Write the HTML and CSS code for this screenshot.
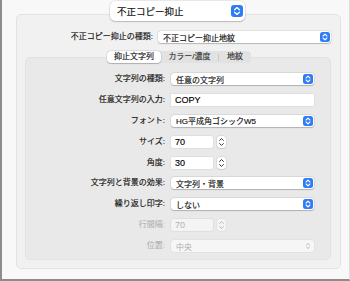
FILE: index.html
```html
<!DOCTYPE html>
<html lang="ja">
<head>
  <meta charset="UTF-8" />
  <title>不正コピー抑止</title>
  <link rel="stylesheet" href="styles.css">
</head>
<body>
  <div class="window">
    <div class="top-row">
      <div class="big-popup">
        <span>不正コピー抑止</span>
        <span class="arrows big">
          <svg viewBox="0 0 12 12" width="12" height="12"><path d="M3.6 4.8 6 2.6 8.4 4.8M3.6 7.2 6 9.4 8.4 7.2" fill="none" stroke="#fff" stroke-width="1.3" stroke-linecap="round" stroke-linejoin="round"/></svg>
        </span>
      </div>
    </div>

    <div class="group">
      <div class="form kind-row">
        <div class="label">不正コピー抑止の種類:</div>
        <div class="popup">
          <span>不正コピー抑止地紋</span>
          <span class="arrows"><svg viewBox="0 0 10 10" width="10" height="10"><path d="M3.1 4 5 2.2 6.9 4M3.1 6 5 7.8 6.9 6" fill="none" stroke="#fff" stroke-width="1.1" stroke-linecap="round" stroke-linejoin="round"/></svg></span>
        </div>
      </div>

      <div class="tabs">
        <div class="tab active">抑止文字列</div>
        <div class="tab">カラー/濃度</div>
        <div class="sep"></div>
        <div class="tab">地紋</div>
      </div>

      <div class="panel">
        <div class="form">
          <div class="label">文字列の種類:</div>
          <div class="popup">
            <span>任意の文字列</span>
            <span class="arrows"><svg viewBox="0 0 10 10" width="10" height="10"><path d="M3.1 4 5 2.2 6.9 4M3.1 6 5 7.8 6.9 6" fill="none" stroke="#fff" stroke-width="1.1" stroke-linecap="round" stroke-linejoin="round"/></svg></span>
          </div>

          <div class="label">任意文字列の入力:</div>
          <div class="field latin">COPY</div>

          <div class="label">フォント:</div>
          <div class="popup">
            <span>HG平成角ゴシックW5</span>
            <span class="arrows"><svg viewBox="0 0 10 10" width="10" height="10"><path d="M3.1 4 5 2.2 6.9 4M3.1 6 5 7.8 6.9 6" fill="none" stroke="#fff" stroke-width="1.1" stroke-linecap="round" stroke-linejoin="round"/></svg></span>
          </div>

          <div class="label">サイズ:</div>
          <div class="num-row">
            <div class="field num latin">70</div>
            <div class="stepper"><svg viewBox="0 0 9 12" width="9" height="12"><path d="M2.6 4.4 4.5 2.6 6.4 4.4M2.6 7.6 4.5 9.4 6.4 7.6" fill="none" stroke="#333" stroke-width="1" stroke-linecap="round" stroke-linejoin="round"/></svg></div>
          </div>

          <div class="label">角度:</div>
          <div class="num-row">
            <div class="field num latin">30</div>
            <div class="stepper"><svg viewBox="0 0 9 12" width="9" height="12"><path d="M2.6 4.4 4.5 2.6 6.4 4.4M2.6 7.6 4.5 9.4 6.4 7.6" fill="none" stroke="#333" stroke-width="1" stroke-linecap="round" stroke-linejoin="round"/></svg></div>
          </div>

          <div class="label">文字列と背景の効果:</div>
          <div class="popup">
            <span>文字列・背景</span>
            <span class="arrows"><svg viewBox="0 0 10 10" width="10" height="10"><path d="M3.1 4 5 2.2 6.9 4M3.1 6 5 7.8 6.9 6" fill="none" stroke="#fff" stroke-width="1.1" stroke-linecap="round" stroke-linejoin="round"/></svg></span>
          </div>

          <div class="label">繰り返し印字:</div>
          <div class="popup">
            <span>しない</span>
            <span class="arrows"><svg viewBox="0 0 10 10" width="10" height="10"><path d="M3.1 4 5 2.2 6.9 4M3.1 6 5 7.8 6.9 6" fill="none" stroke="#fff" stroke-width="1.1" stroke-linecap="round" stroke-linejoin="round"/></svg></span>
          </div>

          <div class="label disabled">行間隔:</div>
          <div class="num-row disabled">
            <div class="field num latin">70</div>
            <div class="stepper"><svg viewBox="0 0 9 12" width="9" height="12"><path d="M2.6 4.4 4.5 2.6 6.4 4.4M2.6 7.6 4.5 9.4 6.4 7.6" fill="none" stroke="#b8b8b8" stroke-width="1" stroke-linecap="round" stroke-linejoin="round"/></svg></div>
          </div>

          <div class="label disabled">位置:</div>
          <div class="popup disabled">
            <span>中央</span>
            <span class="arrows plain"><svg viewBox="0 0 10 10" width="10" height="10"><path d="M3.4 4 5 2.5 6.6 4M3.4 6 5 7.5 6.6 6" fill="none" stroke="#b5b5b5" stroke-width="0.9" stroke-linecap="round" stroke-linejoin="round"/></svg></span>
          </div>
        </div>
      </div>
    </div>
  </div>
</body>
</html>
```

FILE: styles.css
```css
* {
  box-sizing: border-box;
}

body {
  margin: 0;
  font-family: "Liberation Sans", "Noto Sans CJK JP", sans-serif;
  font-size: 8px;
  color: #111;
  background: #fff;
  -webkit-text-stroke: 0.15px;
}

.window {
  width: 350px;
  height: 281px;
  background: #f8f8f8;
  border-left: 2px solid #8c8c8c;
  border-bottom: 2px solid #8c8c8c;
  border-right: 1px solid #dcdcdc;
  padding-top: 1px;
}

.top-row {
  display: flex;
  padding-left: 108px;
  position: relative;
  z-index: 1;
}

.big-popup {
  width: 135px;
  height: 20px;
  display: flex;
  align-items: center;
  justify-content: space-between;
  padding: 0 2px 0 7px;
  background: #fff;
  border-radius: 5px;
  box-shadow: 0 0 0 0.5px rgba(0, 0, 0, 0.12), 0 1px 1.5px rgba(0, 0, 0, 0.18);
  font-size: 9.5px;
  color: #111;
}

.group {
  margin: -7px 8px 0 14px;
  height: 255px;
  background: #f1f1f1;
  border: 1px solid #e3e3e3;
  border-radius: 5px;
  padding: 16px 9px 8px 8px;
}

.form {
  display: grid;
  grid-template-columns: 139px 143px;
  grid-auto-rows: 12px;
  column-gap: 6px;
  row-gap: 8.9px;
  align-items: center;
}

.kind-row {
  grid-template-columns: 128px 173px;
  column-gap: 5px;
}

.label {
  text-align: right;
  white-space: nowrap;
  line-height: 12px;
}

.label.disabled {
  color: #a9a9a9;
  -webkit-text-stroke: 0;
}

.popup {
  height: 12px;
  display: flex;
  align-items: center;
  justify-content: space-between;
  padding: 0 1px 0 5px;
  background: #fff;
  border-radius: 3px;
  box-shadow: 0 0 0 0.5px rgba(0, 0, 0, 0.1), 0 0.5px 1px rgba(0, 0, 0, 0.2);
  white-space: nowrap;
}

.popup.disabled {
  color: #b0b0b0;
  background: #f6f6f6;
  box-shadow: 0 0 0 0.5px rgba(0, 0, 0, 0.06);
  -webkit-text-stroke: 0;
}

.arrows {
  width: 10px;
  height: 10px;
  display: flex;
  background: #2f7df5;
  border-radius: 2.5px;
}

.arrows.big {
  width: 12px;
  height: 12px;
  border-radius: 3px;
}

.arrows.plain {
  background: none;
}

.tabs {
  display: flex;
  align-items: center;
  width: 144px;
  height: 12px;
  margin: 8px 0 -6px 82px;
  background: #e2e2e2;
  border-radius: 4px;
  position: relative;
  z-index: 1;
  color: #333;
}

.tab {
  height: 12px;
  line-height: 12px;
  text-align: center;
  white-space: nowrap;
}

.tab:nth-child(1) {
  width: 54px;
}

.tab:nth-child(2) {
  width: 57px;
}

.tab:nth-child(4) {
  flex: 1;
}

.tab.active {
  background: #fff;
  border-radius: 4px;
  box-shadow: 0 0 0 0.5px rgba(0, 0, 0, 0.12), 0 0.5px 1px rgba(0, 0, 0, 0.2);
  color: #111;
}

.sep {
  width: 1px;
  height: 7px;
  background: #c9c9c9;
}

.panel {
  height: 203px;
  background: #e9e9e9;
  border: 1px solid #e2e2e2;
  border-radius: 5px;
  padding: 15px 16px 7px 0;
}

.field {
  height: 12px;
  line-height: 12px;
  background: #fff;
  padding-left: 4px;
  color: #000;
  box-shadow: 0 0 0 0.5px rgba(0, 0, 0, 0.08);
}

.latin {
  font-size: 9px;
}

.num-row {
  display: flex;
  align-items: center;
  gap: 4px;
}

.field.num {
  width: 42px;
  border-radius: 2px;
}

.stepper {
  width: 9px;
  height: 12px;
  display: flex;
  background: #fff;
  border-radius: 3px;
  box-shadow: 0 0 0 0.5px rgba(0, 0, 0, 0.1), 0 0.5px 1px rgba(0, 0, 0, 0.15);
}

.num-row.disabled .field {
  background: #f4f4f4;
  color: #b0b0b0;
  -webkit-text-stroke: 0;
}

.num-row.disabled .stepper {
  background: #f4f4f4;
  box-shadow: 0 0 0 0.5px rgba(0, 0, 0, 0.06);
}
```
